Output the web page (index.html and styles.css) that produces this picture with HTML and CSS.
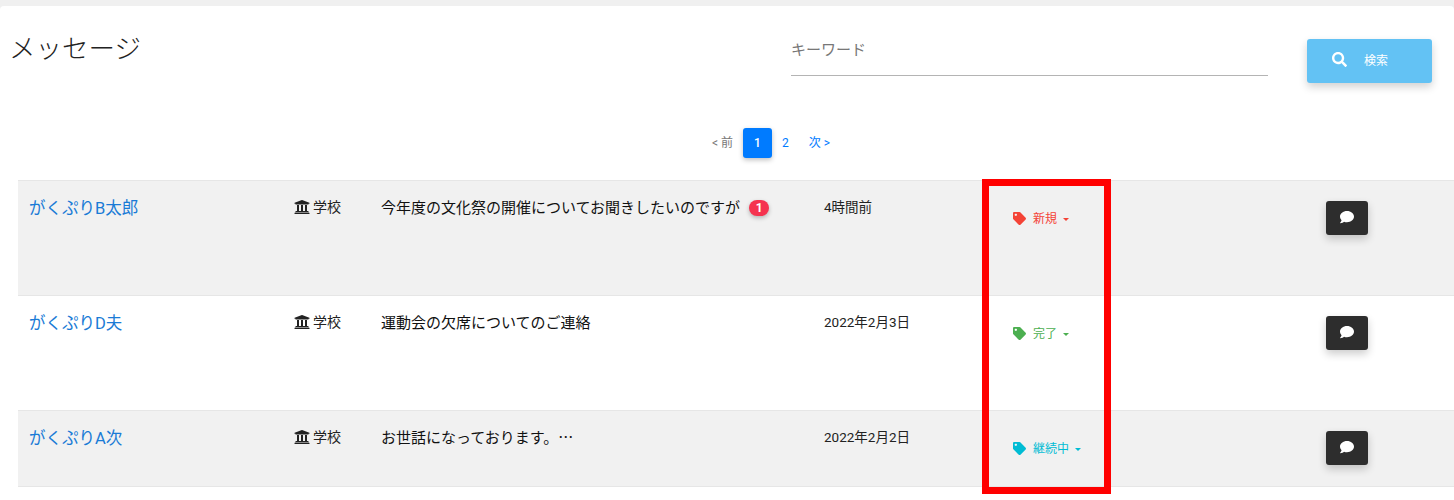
FILE: index.html
```html
<!DOCTYPE html>
<html lang="ja">
<head>
  <title>メッセージ</title>
  <link rel="stylesheet" href="styles.css">
</head>
<body>
  <svg class="icon-defs" width="0" height="0">
    <symbol id="i-tag" viewBox="0 0 512 512"><path d="M0 252.118V48C0 21.49 21.49 0 48 0h204.118a48 48 0 0 1 33.941 14.059l211.882 211.882c18.745 18.745 18.745 49.137 0 67.882L293.823 497.941c-18.745 18.745-49.137 18.745-67.882 0L14.059 286.059A48 48 0 0 1 0 252.118zM112 64c-26.51 0-48 21.49-48 48s21.49 48 48 48 48-21.49 48-48-21.49-48-48-48z"/></symbol>
    <symbol id="i-school" viewBox="0 0 512 512"><path d="M496 128v16a8 8 0 0 1-8 8h-24v12c0 6.627-5.373 12-12 12H60c-6.627 0-12-5.373-12-12v-12H24a8 8 0 0 1-8-8v-16a8 8 0 0 1 4.941-7.392l232-88a8 8 0 0 1 6.118 0l232 88A8 8 0 0 1 496 128zm-24 304H40c-13.255 0-24 10.745-24 24v16a8 8 0 0 0 8 8h464a8 8 0 0 0 8-8v-16c0-13.255-10.745-24-24-24zM96 192v192H60c-6.627 0-12 5.373-12 12v20h416v-20c0-6.627-5.373-12-12-12h-36V192h-64v192h-64V192h-64v192h-64V192H96z"/></symbol>
    <symbol id="i-comment" viewBox="0 0 512 512"><path d="M256 32C114.6 32 0 125.1 0 240c0 49.6 21.4 95 57 130.7C44.5 421.1 2.7 466 2.2 466.5c-2.2 2.3-2.8 5.7-1.5 8.7S4.8 480 8 480c66.3 0 116-31.8 140.6-51.4 32.7 12.3 69 19.4 107.4 19.4 141.4 0 256-93.1 256-208S397.4 32 256 32z"/></symbol>
  </svg>

  <div class="card">
    <div class="page-head">
      <h1 class="page-title">メッセージ</h1>
      <div class="search-field">キーワード</div>
      <button class="btn-search">
        <svg class="search-icon" viewBox="0 0 512 512"><path d="M505 442.7L405.3 343c-4.5-4.5-10.6-7-17-7H372c27.6-35.3 44-79.7 44-128C416 93.1 322.9 0 208 0S0 93.1 0 208s93.1 208 208 208c48.3 0 92.7-16.4 128-44v16.3c0 6.4 2.5 12.5 7 17l99.7 99.7c9.4 9.4 24.6 9.4 33.9 0l28.3-28.3c9.4-9.4 9.4-24.6.1-34zM208 336c-70.7 0-128-57.2-128-128 0-70.7 57.2-128 128-128 70.7 0 128 57.2 128 128 0 70.7-57.2 128-128 128z"/></svg>
        <span>検索</span>
      </button>
    </div>

    <div class="pager">
      <span class="page-link disabled">&lt; 前</span>
      <span class="page-link current">1</span>
      <span class="page-link">2</span>
      <span class="page-link">次 &gt;</span>
    </div>

    <div class="message-list">
      <div class="message-row tall striped">
        <a class="sender">がくぷりB太郎</a>
        <div class="kind"><svg class="kind-icon"><use href="#i-school"/></svg>学校</div>
        <div class="subject">今年度の文化祭の開催についてお聞きしたいのですが<span class="badge">1</span></div>
        <div class="date">4時間前</div>
        <div class="status status-new"><svg class="tag-icon"><use href="#i-tag"/></svg>新規<i class="caret"></i></div>
        <div><button class="btn-chat"><svg class="chat-icon"><use href="#i-comment"/></svg></button></div>
      </div>
      <div class="message-row tall">
        <a class="sender">がくぷりD夫</a>
        <div class="kind"><svg class="kind-icon"><use href="#i-school"/></svg>学校</div>
        <div class="subject">運動会の欠席についてのご連絡</div>
        <div class="date">2022年2月3日</div>
        <div class="status status-done"><svg class="tag-icon"><use href="#i-tag"/></svg>完了<i class="caret"></i></div>
        <div><button class="btn-chat"><svg class="chat-icon"><use href="#i-comment"/></svg></button></div>
      </div>
      <div class="message-row striped">
        <a class="sender">がくぷりA次</a>
        <div class="kind"><svg class="kind-icon"><use href="#i-school"/></svg>学校</div>
        <div class="subject">お世話になっております。…</div>
        <div class="date">2022年2月2日</div>
        <div class="status status-open"><svg class="tag-icon"><use href="#i-tag"/></svg>継続中<i class="caret"></i></div>
        <div><button class="btn-chat"><svg class="chat-icon"><use href="#i-comment"/></svg></button></div>
      </div>
    </div>
  </div>

  <div class="highlight-box"></div>
</body>
</html>
```

FILE: styles.css
```css
body {
  margin: 0;
  height: 500px;
  overflow: hidden;
  background-color: #f0f0f0;
  font-family: Roboto, "Noto Sans CJK JP", sans-serif;
  color: #222;
}
.icon-defs {
  display: block;
  height: 0;
}
.card {
  margin-top: 6px;
  height: 494px;
  background-color: white;
  border-radius: 4px 4px 0 0;
}
.page-head {
  display: flex;
  align-items: flex-start;
  height: 122px;
}
.page-title {
  width: 782px;
  margin: 0;
  padding: 25px 0 0 9px;
  font-size: 26.5px;
  font-weight: 300;
  line-height: 36px;
  color: #222;
}
.search-field {
  width: 477px;
  height: 70px;
  box-sizing: border-box;
  padding-top: 33px;
  border-bottom: 1px solid #b4b4b4;
  font-size: 15px;
  line-height: 22px;
  color: #777;
}
.btn-search {
  display: flex;
  align-items: center;
  width: 125px;
  height: 44px;
  margin: 33px 0 0 39px;
  padding: 0 0 3px 25px;
  border: none;
  border-radius: 3px;
  background-color: #63c2f4;
  color: white;
  font-family: inherit;
  font-size: 12px;
  box-shadow: 0 4px 8px rgba(0,0,0,0.18);
}
.search-icon {
  width: 15px;
  height: 15px;
  margin-right: 17px;
  fill: white;
}
.pager {
  display: flex;
  align-items: center;
  justify-content: center;
  height: 30px;
  padding-left: 88px;
  font-size: 12px;
  color: #007bff;
}
.page-link {
  padding: 0 10px;
  line-height: 30px;
}
.page-link.disabled {
  color: #777;
}
.page-link.current {
  width: 29px;
  padding: 0;
  box-sizing: border-box;
  border-radius: 3px;
  text-align: center;
  font-weight: 500;
  background-color: #007bff;
  color: white;
  box-shadow: 0 2px 5px rgba(0,0,0,0.25);
}
.message-list {
  margin: 22px 0 0 18px;
}
.message-row {
  display: grid;
  grid-template-columns: 266px 86px 443px 189px 313px 1fr;
  height: 75px;
  padding-left: 11px;
  border-top: 1px solid #e6e6e6;
  border-bottom: 0;
}
.message-row:last-child {
  border-bottom: 1px solid #e6e6e6;
}
.tall {
  height: 114px;
}
.striped {
  background-color: #f1f1f1;
}
.sender {
  padding-top: 16px;
  font-size: 16.5px;
  line-height: 24px;
  color: #1a7bd6;
}
.kind {
  display: flex;
  align-items: flex-start;
  padding-top: 15px;
  font-size: 14px;
  line-height: 22px;
}
.kind-icon {
  width: 16px;
  height: 16px;
  margin: 3px 3px 0 -1px;
  fill: #222;
}
.subject {
  padding-top: 15px;
  font-family: "Noto Sans CJK JP", sans-serif;
  font-size: 15px;
  line-height: 22px;
  color: #111;
}
.badge {
  display: inline-block;
  width: 20px;
  margin-left: 9px;
  border-radius: 8px;
  background-color: #f5334f;
  color: white;
  text-align: center;
  font-family: Roboto, sans-serif;
  font-size: 12px;
  font-weight: 700;
  line-height: 16px;
  vertical-align: 1px;
  box-shadow: 0 2px 4px rgba(0,0,0,0.25);
}
.date {
  padding-top: 15px;
  font-size: 13.5px;
  line-height: 22px;
}
.status {
  display: flex;
  align-items: center;
  height: 18px;
  padding-top: 29px;
  font-size: 12px;
  line-height: 16px;
}
.tag-icon {
  width: 13px;
  height: 13px;
  margin: 0 7px 2px 0;
  fill: currentColor;
}
.caret {
  width: 0;
  height: 0;
  margin-left: 6px;
  border-top: 3px solid currentColor;
  border-left: 3px solid transparent;
  border-right: 3px solid transparent;
}
.status-new {
  color: #f44336;
}
.status-done {
  color: #4caf50;
}
.status-open {
  color: #00bcd4;
}
.btn-chat {
  display: flex;
  align-items: center;
  justify-content: center;
  width: 42px;
  height: 34px;
  margin-top: 20px;
  padding: 0 0 2px;
  border: none;
  border-radius: 3px;
  background-color: #2d2d2d;
  box-shadow: 0 4px 8px rgba(0,0,0,0.2);
}
.chat-icon {
  width: 14px;
  height: 14px;
  fill: white;
}
.highlight-box {
  position: absolute;
  left: 982px;
  top: 179px;
  width: 129px;
  height: 315px;
  box-sizing: border-box;
  border: 7px solid #ff0000;
}
```
